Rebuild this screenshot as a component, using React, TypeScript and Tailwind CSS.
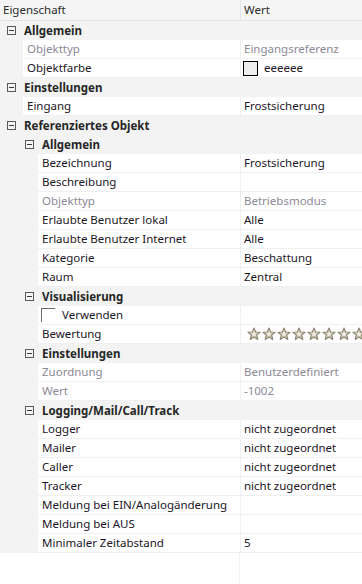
import React from "react";

type Row =
  | { kind: "cat"; level: number; label: string }
  | {
      kind: "prop";
      level: number;
      label: string;
      value?: string;
      disabled?: boolean;
      special?: "color" | "stars" | "check";
    };

const rows: Row[] = [
  { kind: "cat", level: 0, label: "Allgemein" },
  { kind: "prop", level: 1, label: "Objekttyp", value: "Eingangsreferenz", disabled: true },
  { kind: "prop", level: 1, label: "Objektfarbe", value: "eeeeee", special: "color" },
  { kind: "cat", level: 0, label: "Einstellungen" },
  { kind: "prop", level: 1, label: "Eingang", value: "Frostsicherung" },
  { kind: "cat", level: 0, label: "Referenziertes Objekt" },
  { kind: "cat", level: 1, label: "Allgemein" },
  { kind: "prop", level: 2, label: "Bezeichnung", value: "Frostsicherung" },
  { kind: "prop", level: 2, label: "Beschreibung", value: "" },
  { kind: "prop", level: 2, label: "Objekttyp", value: "Betriebsmodus", disabled: true },
  { kind: "prop", level: 2, label: "Erlaubte Benutzer lokal", value: "Alle" },
  { kind: "prop", level: 2, label: "Erlaubte Benutzer Internet", value: "Alle" },
  { kind: "prop", level: 2, label: "Kategorie", value: "Beschattung" },
  { kind: "prop", level: 2, label: "Raum", value: "Zentral" },
  { kind: "cat", level: 1, label: "Visualisierung" },
  { kind: "prop", level: 2, label: "Verwenden", special: "check" },
  { kind: "prop", level: 2, label: "Bewertung", special: "stars" },
  { kind: "cat", level: 1, label: "Einstellungen" },
  { kind: "prop", level: 2, label: "Zuordnung", value: "Benutzerdefiniert", disabled: true },
  { kind: "prop", level: 2, label: "Wert", value: "-1002", disabled: true },
  { kind: "cat", level: 1, label: "Logging/Mail/Call/Track" },
  { kind: "prop", level: 2, label: "Logger", value: "nicht zugeordnet" },
  { kind: "prop", level: 2, label: "Mailer", value: "nicht zugeordnet" },
  { kind: "prop", level: 2, label: "Caller", value: "nicht zugeordnet" },
  { kind: "prop", level: 2, label: "Tracker", value: "nicht zugeordnet" },
  { kind: "prop", level: 2, label: "Meldung bei EIN/Analogänderung", value: "" },
  { kind: "prop", level: 2, label: "Meldung bei AUS", value: "" },
  { kind: "prop", level: 2, label: "Minimaler Zeitabstand", value: "5" },
];

function Star() {
  return (
    <svg width="14" height="14" viewBox="0 0 14 14" className="shrink-0">
      <defs>
        <linearGradient id="sg" x1="0" y1="0" x2="0" y2="1">
          <stop offset="0" stopColor="#e6e1d2" />
          <stop offset="1" stopColor="#b8b09a" />
        </linearGradient>
      </defs>
      <path
        d="M7 1 L8.7 5 L13 5.3 L9.7 8.1 L10.8 12.5 L7 10.1 L3.2 12.5 L4.3 8.1 L1 5.3 L5.3 5 Z"
        fill="url(#sg)"
        stroke="#8d8571"
        strokeWidth="1.1"
        strokeLinejoin="round"
      />
      <path d="M7 4.6 L7.8 6.4 L9.6 6.6 L8.2 7.8 L8.7 9.6 L7 8.6 L5.3 9.6 L5.8 7.8 L4.4 6.6 L6.2 6.4 Z" fill="#f4f1e8" />
    </svg>
  );
}

function Toggle() {
  return (
    <div className="w-[9px] h-[9px] border border-[#5a5a5a] flex items-center justify-center">
      <div className="w-[5px] h-px bg-[#3a3a3a]" />
    </div>
  );
}

function CategoryRow({ level, label }: { level: number; label: string }) {
  return (
    <div className="h-[19px] flex items-center bg-[#f3f3f3]">
      <div className={level === 0 ? "w-[24px] pl-[7px] flex items-center" : "w-[42px] pl-[25px] flex items-center"}>
        <Toggle />
      </div>
      <span className="font-bold text-[#262626]">{label}</span>
    </div>
  );
}

function PropRow({ row }: { row: Extract<Row, { kind: "prop" }> }) {
  const indent = row.level === 1 ? "w-[23px]" : "w-[38px]";
  const color = row.disabled ? "text-[#8c8896]" : "text-[#1c1626]";
  return (
    <div className="h-[19px] flex bg-[#f3f3f3]">
      <div className={`${indent} shrink-0`} />
      <div className="flex-1 flex bg-white border-b border-[#f0f0f0]">
        <div className={`flex-1 flex items-center pl-[4px] whitespace-nowrap ${color}`}>
          {row.special === "check" ? (
            <>
              <div className="w-[14px] h-[14px] border-l border-t border-[#6a6a6a] -ml-[1px] mr-[7px]" />
              <span>{row.label}</span>
            </>
          ) : (
            <span>{row.label}</span>
          )}
        </div>
        <div className={`w-[122px] shrink-0 bg-white border-l border-[#f0f0f0] flex items-center pl-[3px] overflow-hidden whitespace-nowrap ${color}`}>
          {row.special === "color" && (
            <div className="flex items-center gap-[6px] -ml-[1px]">
              <div className="w-[15px] h-[15px] border border-black bg-[#eeeeee]" />
              <span>{row.value}</span>
            </div>
          )}
          {row.special === "stars" && (
            <div className="flex gap-px ml-[3px]">
              {Array.from({ length: 9 }).map((_, i) => (
                <Star key={i} />
              ))}
            </div>
          )}
          {!row.special && <span>{row.value}</span>}
        </div>
      </div>
    </div>
  );
}

export default function App() {
  return (
    <div
      className="w-[362px] h-[584px] bg-white flex flex-col text-[11.5px] leading-none overflow-hidden"
      style={{ fontFamily: '"Noto Sans", "Open Sans", sans-serif' }}
    >
      <div className="h-[21px] flex bg-[#f5f5f5] border-b border-[#e3e3e3] shrink-0">
        <div className="w-[240px] flex items-center pl-[3px] text-[#2a2a2a]">Eigenschaft</div>
        <div className="flex-1 flex items-center pl-[3px] border-l border-[#e6e6e6] text-[#2a2a2a]">Wert</div>
      </div>
      {rows.map((r, i) =>
        r.kind === "cat" ? (
          <CategoryRow key={i} level={r.level} label={r.label} />
        ) : (
          <PropRow key={i} row={r} />
        )
      )}
      <div className="flex-1 flex">
        <div className="w-[240px] border-r border-[#f0f0f0]" />
      </div>
    </div>
  );
}
